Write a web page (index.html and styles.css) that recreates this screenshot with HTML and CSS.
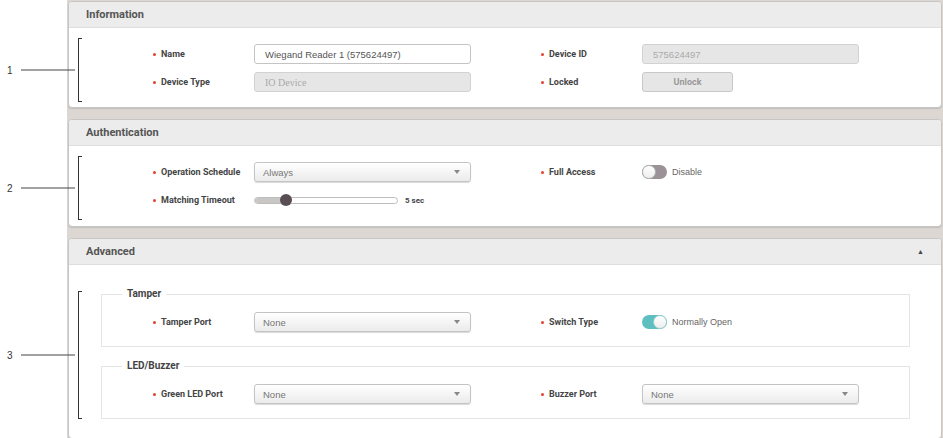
FILE: index.html
```html
<!DOCTYPE html>
<html lang="en">
<head>
  <meta charset="UTF-8">
  <title>Device Detail</title>
  <link rel="stylesheet" href="styles.css">
</head>
<body>
  <div class="page">
    <section class="panel">
      <div class="panel-head"><h2>Information</h2></div>
      <div class="panel-body">
        <div class="bracket">
          <div class="callout"><span>1</span><i></i></div>
          <div class="form-grid">
            <div class="field">
              <span class="label">Name</span>
              <div class="text-input">Wiegand Reader 1 (575624497)</div>
            </div>
            <div class="field">
              <span class="label">Device ID</span>
              <div class="text-input disabled">575624497</div>
            </div>
            <div class="field">
              <span class="label">Device Type</span>
              <div class="text-input disabled serif">IO Device</div>
            </div>
            <div class="field">
              <span class="label">Locked</span>
              <button class="btn-unlock">Unlock</button>
            </div>
          </div>
        </div>
      </div>
    </section>

    <section class="panel">
      <div class="panel-head"><h2>Authentication</h2></div>
      <div class="panel-body auth">
        <div class="bracket">
          <div class="callout"><span>2</span><i></i></div>
          <div class="form-grid">
            <div class="field">
              <span class="label">Operation Schedule</span>
              <div class="select"><span>Always</span><b class="caret"></b></div>
            </div>
            <div class="field">
              <span class="label">Full Access</span>
              <div class="switch"><span class="toggle"><span class="knob"></span></span>Disable</div>
            </div>
            <div class="field">
              <span class="label">Matching Timeout</span>
              <div class="slider-wrap">
                <div class="slider"><span class="slider-fill"></span><span class="slider-knob"></span></div>
                <span class="slider-value">5 sec</span>
              </div>
            </div>
          </div>
        </div>
      </div>
    </section>

    <section class="panel">
      <div class="panel-head"><h2>Advanced</h2><span class="collapse">&#9650;</span></div>
      <div class="panel-body advanced">
        <div class="bracket">
          <div class="callout"><span>3</span><i></i></div>
          <fieldset class="group">
            <legend>Tamper</legend>
            <div class="form-grid">
              <div class="field">
                <span class="label">Tamper Port</span>
                <div class="select"><span>None</span><b class="caret"></b></div>
              </div>
              <div class="field">
                <span class="label">Switch Type</span>
                <div class="switch"><span class="toggle on"><span class="knob"></span></span>Normally Open</div>
              </div>
            </div>
          </fieldset>
          <fieldset class="group">
            <legend>LED/Buzzer</legend>
            <div class="form-grid">
              <div class="field">
                <span class="label">Green LED Port</span>
                <div class="select"><span>None</span><b class="caret"></b></div>
              </div>
              <div class="field">
                <span class="label">Buzzer Port</span>
                <div class="select"><span>None</span><b class="caret"></b></div>
              </div>
            </div>
          </fieldset>
        </div>
      </div>
    </section>
  </div>
</body>
</html>
```

FILE: styles.css
```css
body {
  margin: 0;
  background: #fff;
  font-family: "Liberation Sans", Arial, sans-serif;
  color: #444;
}
.page {
  margin-left: 67px;
  min-height: 100vh;
  box-sizing: border-box;
  padding: 1px 1px 0 1px;
  background: #dcd7d2;
}
.panel {
  background: #fff;
  border: 1px solid #c6c6c6;
  border-radius: 4px;
  box-shadow: 0 1px 1px rgba(0, 0, 0, 0.12);
  margin-bottom: 11px;
}
.panel-head {
  height: 25px;
  display: flex;
  align-items: center;
  justify-content: space-between;
  padding: 0 17px;
  background: #ececec;
  border-bottom: 1px solid #dedede;
  border-radius: 3px 3px 0 0;
}
.panel-head h2 {
  margin: 0;
  font-family: Roboto, sans-serif;
  font-size: 11px;
  font-weight: bold;
  color: #555;
}
.collapse {
  font-size: 7px;
  color: #444;
}
.panel-body {
  padding: 10px 31px 5px 9px;
}
.panel-body.auth {
  padding-bottom: 6px;
}
.panel-body.advanced {
  padding: 26px 31px 19px 9px;
}
.bracket {
  position: relative;
  padding: 6px 0 10px 0;
  background:
    linear-gradient(#333, #333) left top / 1px 100% no-repeat,
    linear-gradient(#333, #333) left top / 4px 1px no-repeat,
    linear-gradient(#333, #333) left bottom / 4px 1px no-repeat;
}
.advanced .bracket {
  padding: 0;
}
.callout {
  position: absolute;
  right: 100%;
  top: 50%;
  transform: translateY(-50%);
  margin-right: 3px;
  width: 68px;
  display: flex;
  align-items: center;
  gap: 8px;
  font-size: 10px;
  color: #333;
}
.callout i {
  flex: 1;
  height: 1px;
  background: #444;
}
.form-grid {
  display: grid;
  grid-template-columns: 318px 318px;
  column-gap: 70px;
  row-gap: 8px;
  padding-left: 75px;
}
.field {
  display: flex;
  align-items: center;
  height: 20px;
}
.label {
  width: 101px;
  flex-shrink: 0;
  display: flex;
  align-items: center;
  font-family: Roboto, sans-serif;
  font-size: 9px;
  font-weight: bold;
  color: #444;
}
.label::before {
  content: "";
  width: 3px;
  height: 3px;
  border-radius: 50%;
  background: #e4402e;
  margin-right: 5px;
}
.text-input {
  width: 217px;
  height: 20px;
  box-sizing: border-box;
  padding: 0 10px;
  display: flex;
  align-items: center;
  border: 1px solid #c4c4c4;
  border-radius: 3px;
  background: #fff;
  font-size: 9.5px;
  color: #555;
}
.text-input.disabled {
  background: #e6e6e6;
  border-color: #d2d2d2;
  color: #aaa;
}
.text-input.serif {
  font-family: "Liberation Serif", serif;
  font-size: 10px;
}
.btn-unlock {
  width: 91px;
  height: 20px;
  border: 1px solid #c8c8c8;
  border-radius: 3px;
  background: #e6e6e6;
  font-family: Roboto, sans-serif;
  font-size: 9px;
  font-weight: bold;
  color: #999;
  padding: 0;
}
.select {
  width: 217px;
  height: 20px;
  box-sizing: border-box;
  padding: 0 10px 0 8px;
  display: flex;
  align-items: center;
  justify-content: space-between;
  border: 1px solid #c4c4c4;
  border-radius: 3px;
  background: linear-gradient(#fff, #ebebeb);
  box-shadow: 0 1px 1px rgba(0, 0, 0, 0.15);
  font-size: 9.5px;
  color: #777;
}
.caret {
  width: 0;
  height: 0;
  border-left: 3px solid transparent;
  border-right: 3px solid transparent;
  border-top: 4px solid #888;
}
.switch {
  display: flex;
  align-items: center;
  gap: 5px;
  font-size: 9px;
  color: #666;
}
.toggle {
  width: 25px;
  height: 14px;
  border-radius: 7px;
  background: #9b9297;
  display: flex;
  align-items: center;
}
.toggle.on {
  background: #5dbfc0;
  justify-content: flex-end;
}
.knob {
  width: 14px;
  height: 14px;
  box-sizing: border-box;
  border-radius: 50%;
  background: linear-gradient(#fff, #eee);
  border: 1px solid #b5b5b5;
}
.toggle.on .knob {
  border-color: #9fcfd0;
}
.slider-wrap {
  display: flex;
  align-items: center;
  gap: 7px;
}
.slider {
  width: 144px;
  height: 7px;
  box-sizing: border-box;
  border: 1px solid #bdbdbd;
  border-radius: 4px;
  background: #fff;
  display: flex;
  align-items: center;
}
.slider-fill {
  width: 31px;
  height: 100%;
  border-radius: 3px 0 0 3px;
  background: #c9c6c6;
}
.slider-knob {
  width: 12px;
  height: 12px;
  flex-shrink: 0;
  margin-left: -6px;
  border-radius: 50%;
  background: #5a4e55;
}
.slider-value {
  font-family: Roboto, sans-serif;
  font-size: 8px;
  font-weight: bold;
  color: #444;
}
.group {
  margin: 0 0 0 23px;
  padding: 15px 0 14px 20px;
  border: 1px solid #e4e4e4;
}
.group + .group {
  margin-top: 16px;
}
.group legend {
  padding: 0 5px;
  line-height: 6px;
  font-family: Roboto, sans-serif;
  font-size: 10px;
  font-weight: bold;
  color: #444;
}
.group .form-grid {
  padding-left: 31px;
}
```
